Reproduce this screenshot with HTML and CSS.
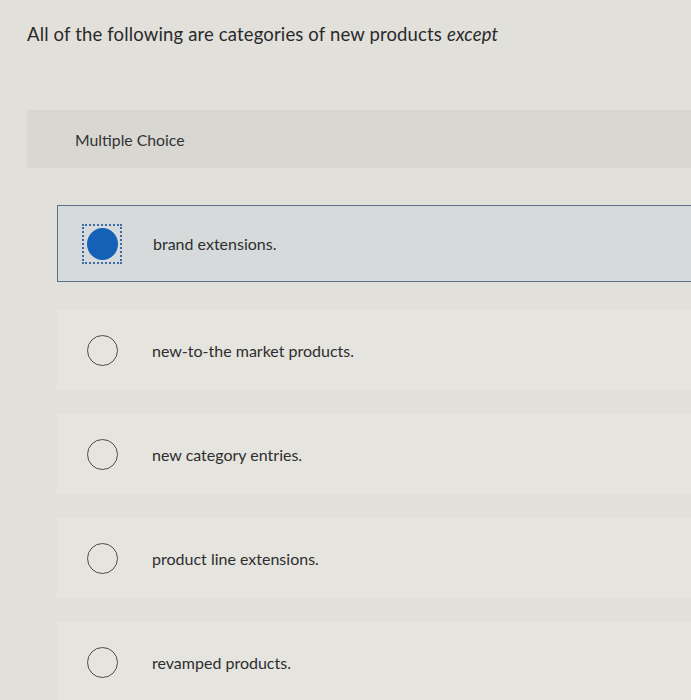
FILE: index.html
```html
<!DOCTYPE html>
<html>
<head>
<meta charset="utf-8">
<link rel="stylesheet" href="styles.css">
</head>
<body>
<div class="page">
  <h1 class="question">All of the following are categories of new products <em>except</em></h1>
  <div class="card">
    <div class="card-head">Multiple Choice</div>
    <div class="options">
      <div class="option selected">
        <span class="focus"><span class="radio"></span></span>
        <span class="label">brand extensions.</span>
      </div>
      <div class="option">
        <span class="focus"><span class="radio"></span></span>
        <span class="label">new-to-the market products.</span>
      </div>
      <div class="option">
        <span class="focus"><span class="radio"></span></span>
        <span class="label">new category entries.</span>
      </div>
      <div class="option">
        <span class="focus"><span class="radio"></span></span>
        <span class="label">product line extensions.</span>
      </div>
      <div class="option">
        <span class="focus"><span class="radio"></span></span>
        <span class="label">revamped products.</span>
      </div>
    </div>
  </div>
</div>
</body>
</html>
```

FILE: styles.css
```css
html, body {
  margin: 0;
  padding: 0;
  background: #e1e0db;
  overflow: hidden;
}
.page {
  width: 691px;
  height: 700px;
  overflow: hidden;
  font-family: Lato, "Open Sans", sans-serif;
  color: #2c2c2c;
}
.question {
  margin: 0;
  padding: 23px 0 0 27px;
  height: 85px;
  box-sizing: border-box;
  font-size: 18.5px;
  letter-spacing: 0.15px;
  font-weight: 400;
  line-height: 22px;
  color: #2a2a2a;
}
.question em {
  font-style: italic;
}
.card {
  margin: 25px 0 0 27px;
}
.card-head {
  height: 58px;
  background: #d8d7d2;
  display: flex;
  align-items: center;
  padding-left: 48px;
  font-size: 15.8px;
  color: #333;
}
.options {
  padding: 37px 0 0 30px;
  display: flex;
  flex-direction: column;
  gap: 24px;
  margin-right: -20px;
}
.option {
  height: 80px;
  display: flex;
  align-items: center;
  background: #e5e4df;
}
.option.selected {
  height: 77px;
  box-sizing: border-box;
  background: #d6dadb;
  border: 1.5px solid #5a708c;
  margin-bottom: 4px;
}
.focus {
  width: 40px;
  height: 40px;
  box-sizing: border-box;
  margin-left: 25px;
  display: flex;
  align-items: center;
  justify-content: center;
  border: 2px dotted transparent;
}
.option.selected .focus {
  margin-left: 24px;
  border-color: #3b6ba6;
}
.radio {
  width: 31px;
  height: 31px;
  box-sizing: border-box;
  border-radius: 50%;
  border: 1.6px solid #4d4d4f;
}
.option.selected .radio {
  border: none;
  background: #1462b8;
  width: 31px;
  height: 32px;
}
.label {
  margin-left: 30px;
  font-size: 16px;
  color: #2e2e2e;
}
.option.selected .label {
  margin-left: 31px;
}
```
